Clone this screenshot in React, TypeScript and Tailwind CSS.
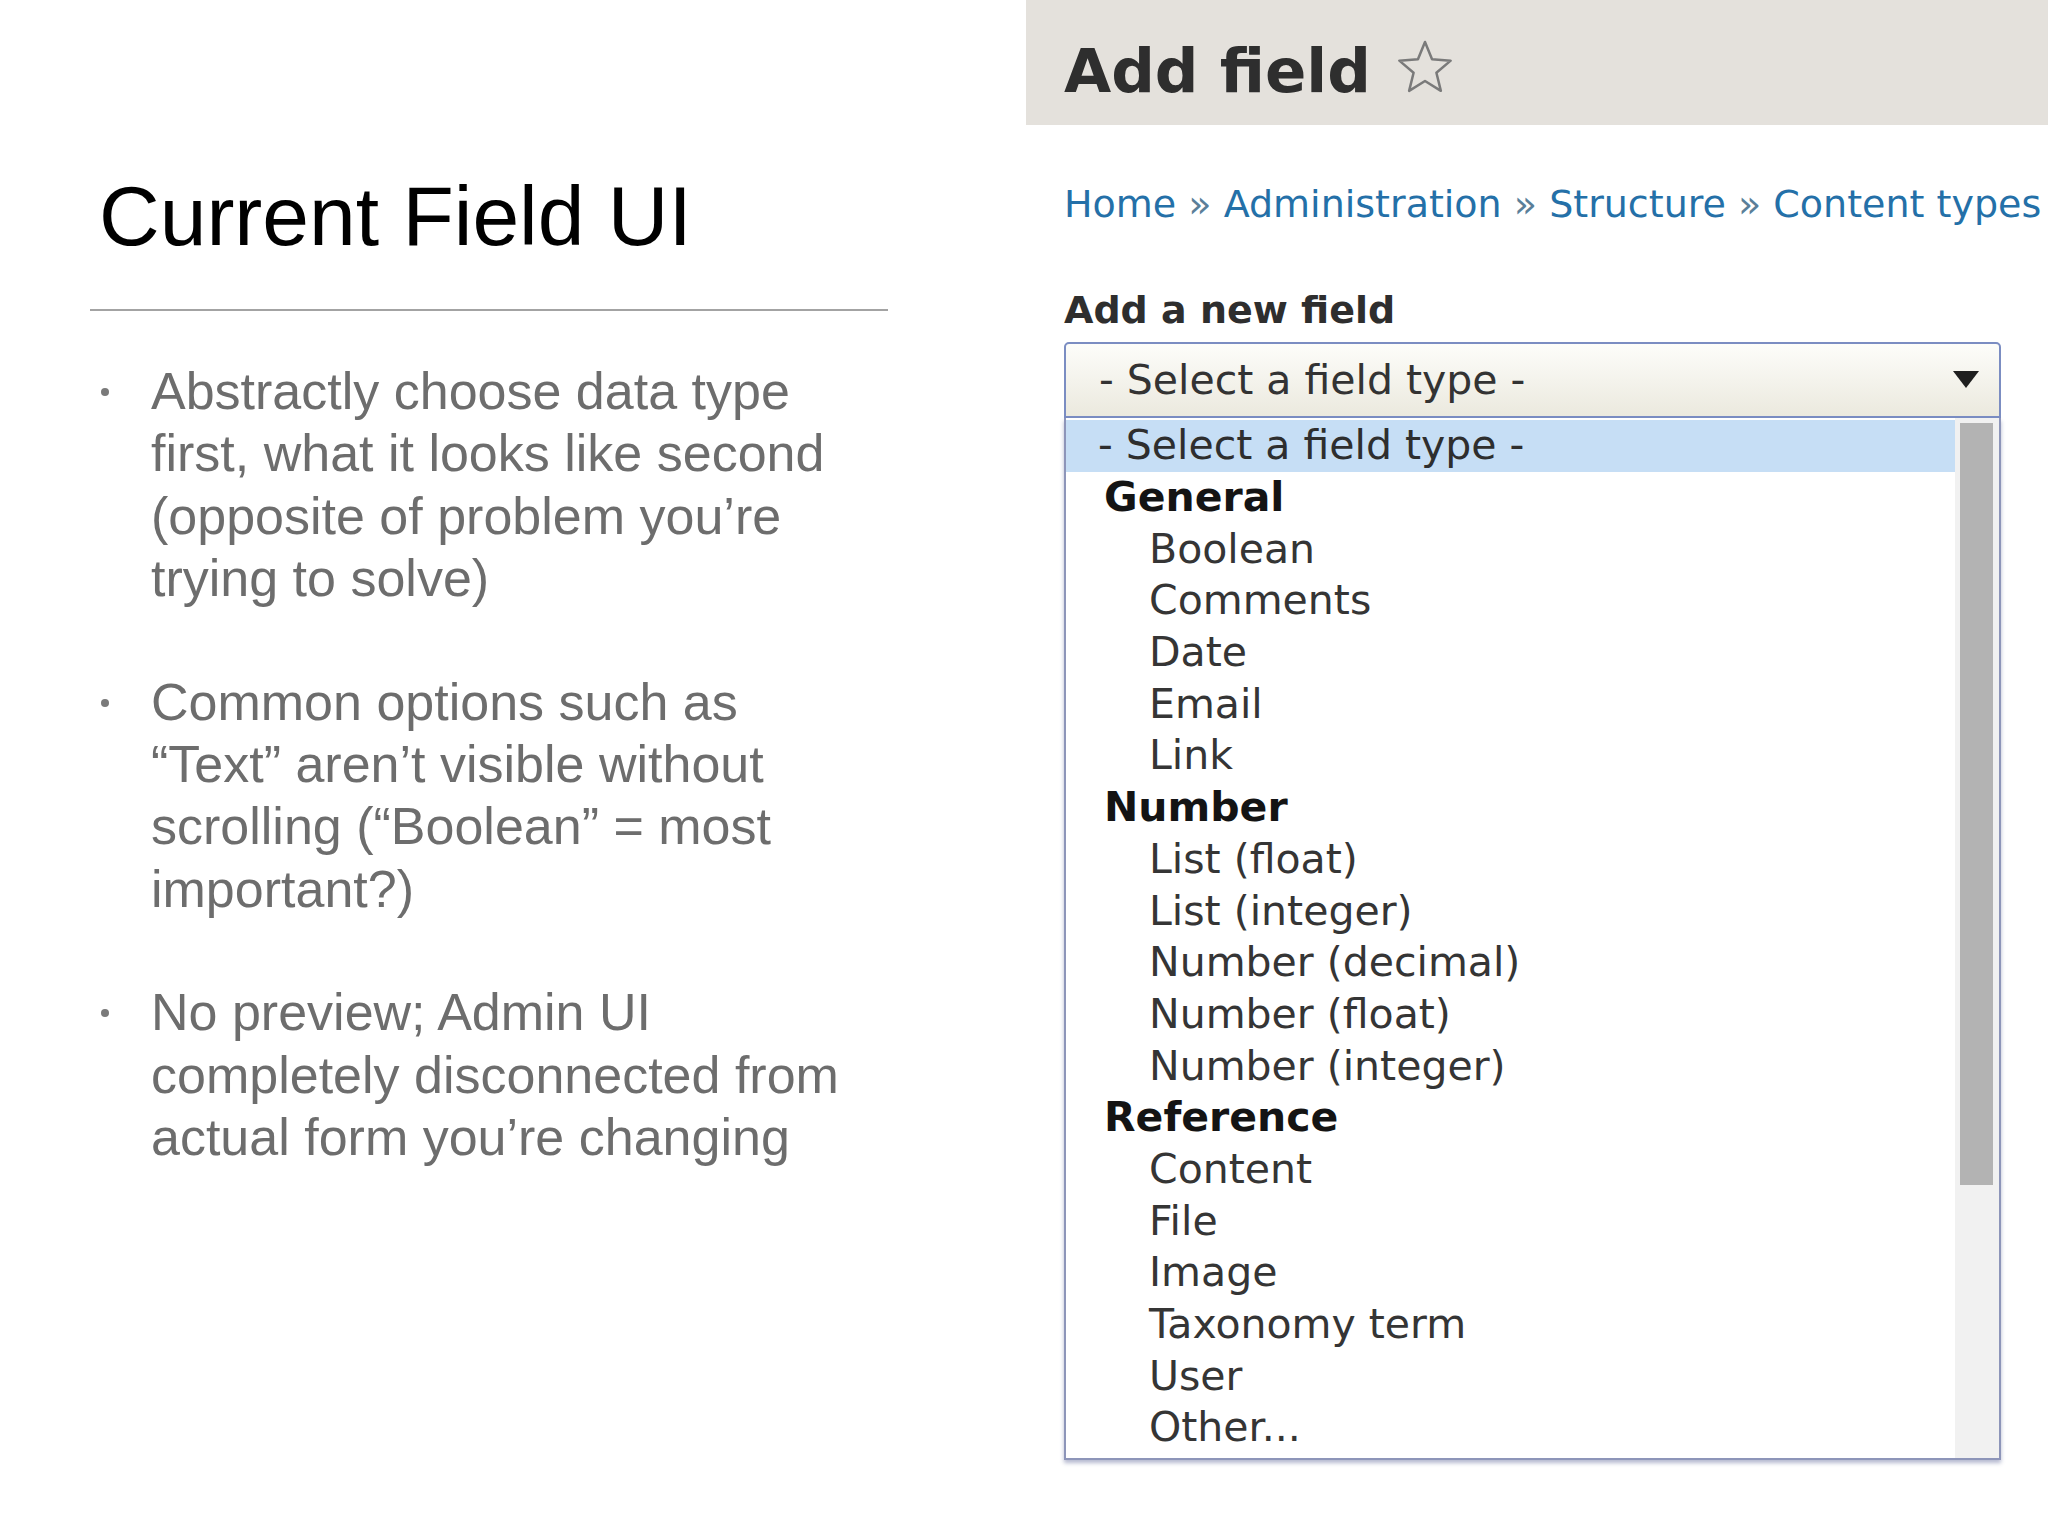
import React from "react";

const bullets = [
  "Abstractly choose data type first, what it looks like second (opposite of problem you’re trying to solve)",
  "Common options such as “Text” aren’t visible without scrolling (“Boolean” = most important?)",
  "No preview; Admin UI completely disconnected from actual form you’re changing",
];

type Row = { label: string; kind: "placeholder" | "group" | "option" };

const rows: Row[] = [
  { label: "- Select a field type -", kind: "placeholder" },
  { label: "General", kind: "group" },
  { label: "Boolean", kind: "option" },
  { label: "Comments", kind: "option" },
  { label: "Date", kind: "option" },
  { label: "Email", kind: "option" },
  { label: "Link", kind: "option" },
  { label: "Number", kind: "group" },
  { label: "List (float)", kind: "option" },
  { label: "List (integer)", kind: "option" },
  { label: "Number (decimal)", kind: "option" },
  { label: "Number (float)", kind: "option" },
  { label: "Number (integer)", kind: "option" },
  { label: "Reference", kind: "group" },
  { label: "Content", kind: "option" },
  { label: "File", kind: "option" },
  { label: "Image", kind: "option" },
  { label: "Taxonomy term", kind: "option" },
  { label: "User", kind: "option" },
  { label: "Other...", kind: "option" },
];

function Star() {
  return (
    <svg width="56" height="54" viewBox="0 0 56 54" className="shrink-0">
      <polygon
        points="28,2 35.05,19.29 53.68,20.66 39.41,32.71 43.87,50.84 28,41 12.13,50.84 16.59,32.71 2.32,20.66 20.95,19.29"
        fill="none"
        stroke="#7a7a7a"
        strokeWidth="2.5"
        strokeLinejoin="round"
      />
    </svg>
  );
}

function SlideText() {
  return (
    <div className="w-[1026px] shrink-0 font-['Liberation_Sans',Arial,sans-serif]">
      <h1 className="pt-[174px] pl-[99px] text-[84px] leading-none font-normal text-black">
        Current Field UI
      </h1>
      <div className="mt-[51px] ml-[90px] w-[798px] h-[2px] bg-[#a3a3a3]" />
      <ul className="mt-[49px] pl-[101px] flex flex-col gap-[61px]">
        {bullets.map((b) => (
          <li key={b} className="flex">
            <div className="w-[50px] shrink-0">
              <div className="mt-[28px] w-[8px] h-[8px] rounded-full bg-[#7a7a7a]" />
            </div>
            <p className="w-[710px] text-[52px] leading-[62.4px] text-[#6d6d6d]">{b}</p>
          </li>
        ))}
      </ul>
    </div>
  );
}

function FieldScreenshot() {
  return (
    <div className="flex-1 flex flex-col font-['DejaVu_Sans',Verdana,sans-serif]">
      {/* page title bar */}
      <div className="h-[125px] bg-[#e4e1dc] pt-[40px] pl-[38px] flex items-start gap-[26px]">
        <h2 className="text-[61px] leading-none font-bold text-[#2e2e2e]">Add field</h2>
        <Star />
      </div>

      <div className="mt-[60px] pl-[38px] text-[38px] leading-none whitespace-nowrap text-[#2470a8]">
        Home <span className="text-[#5b7f99]">»</span> Administration{" "}
        <span className="text-[#5b7f99]">»</span> Structure <span className="text-[#5b7f99]">»</span>{" "}
        Content types
      </div>

      <div className="mt-[68px] pl-[38px] text-[38px] leading-none font-bold text-[#2e2e2e]">
        Add a new field
      </div>

      <div className="mt-[13px] ml-[38px] w-[937px]">
        {/* select box */}
        <div className="h-[76px] flex items-center justify-between pl-[33px] pr-[20px] border-2 border-[#7b8dc2] rounded-t-[5px] bg-[linear-gradient(#fdfdfa,#ebe9de)]">
          <span className="text-[41px] leading-none text-[#333]">- Select a field type -</span>
          <svg width="26" height="18" viewBox="0 0 26 18">
            <polygon points="0,0 26,0 13,17" fill="#1f1f1f" />
          </svg>
        </div>

        {/* open list */}
        <div className="h-[1042px] flex border-x-2 border-b-2 border-[#8d95b9] bg-white shadow-[0_3px_4px_rgba(90,100,150,0.45)]">
          <div className="flex-1 pt-[2px]">
            {rows.map((r) => (
              <div
                key={r.label}
                className={
                  r.kind === "placeholder"
                    ? "h-[51.7px] flex items-center pl-[32px] bg-[#c6def5] text-[41px] leading-none text-[#2e2e2e]"
                    : r.kind === "group"
                      ? "h-[51.7px] flex items-center pl-[38px] text-[41px] leading-none font-bold text-[#141414]"
                      : "h-[51.7px] flex items-center pl-[83px] text-[41px] leading-none text-[#353535]"
                }
              >
                {r.label}
              </div>
            ))}
          </div>
          <div className="w-[44px] shrink-0 bg-[#f1f1f1] pt-[5px]">
            <div className="ml-[5px] w-[33px] h-[762px] bg-[#b3b3b3]" />
          </div>
        </div>
      </div>
    </div>
  );
}

export default function App() {
  return (
    <div className="w-[2048px] h-[1536px] bg-white flex overflow-hidden">
      <SlideText />
      <FieldScreenshot />
    </div>
  );
}
